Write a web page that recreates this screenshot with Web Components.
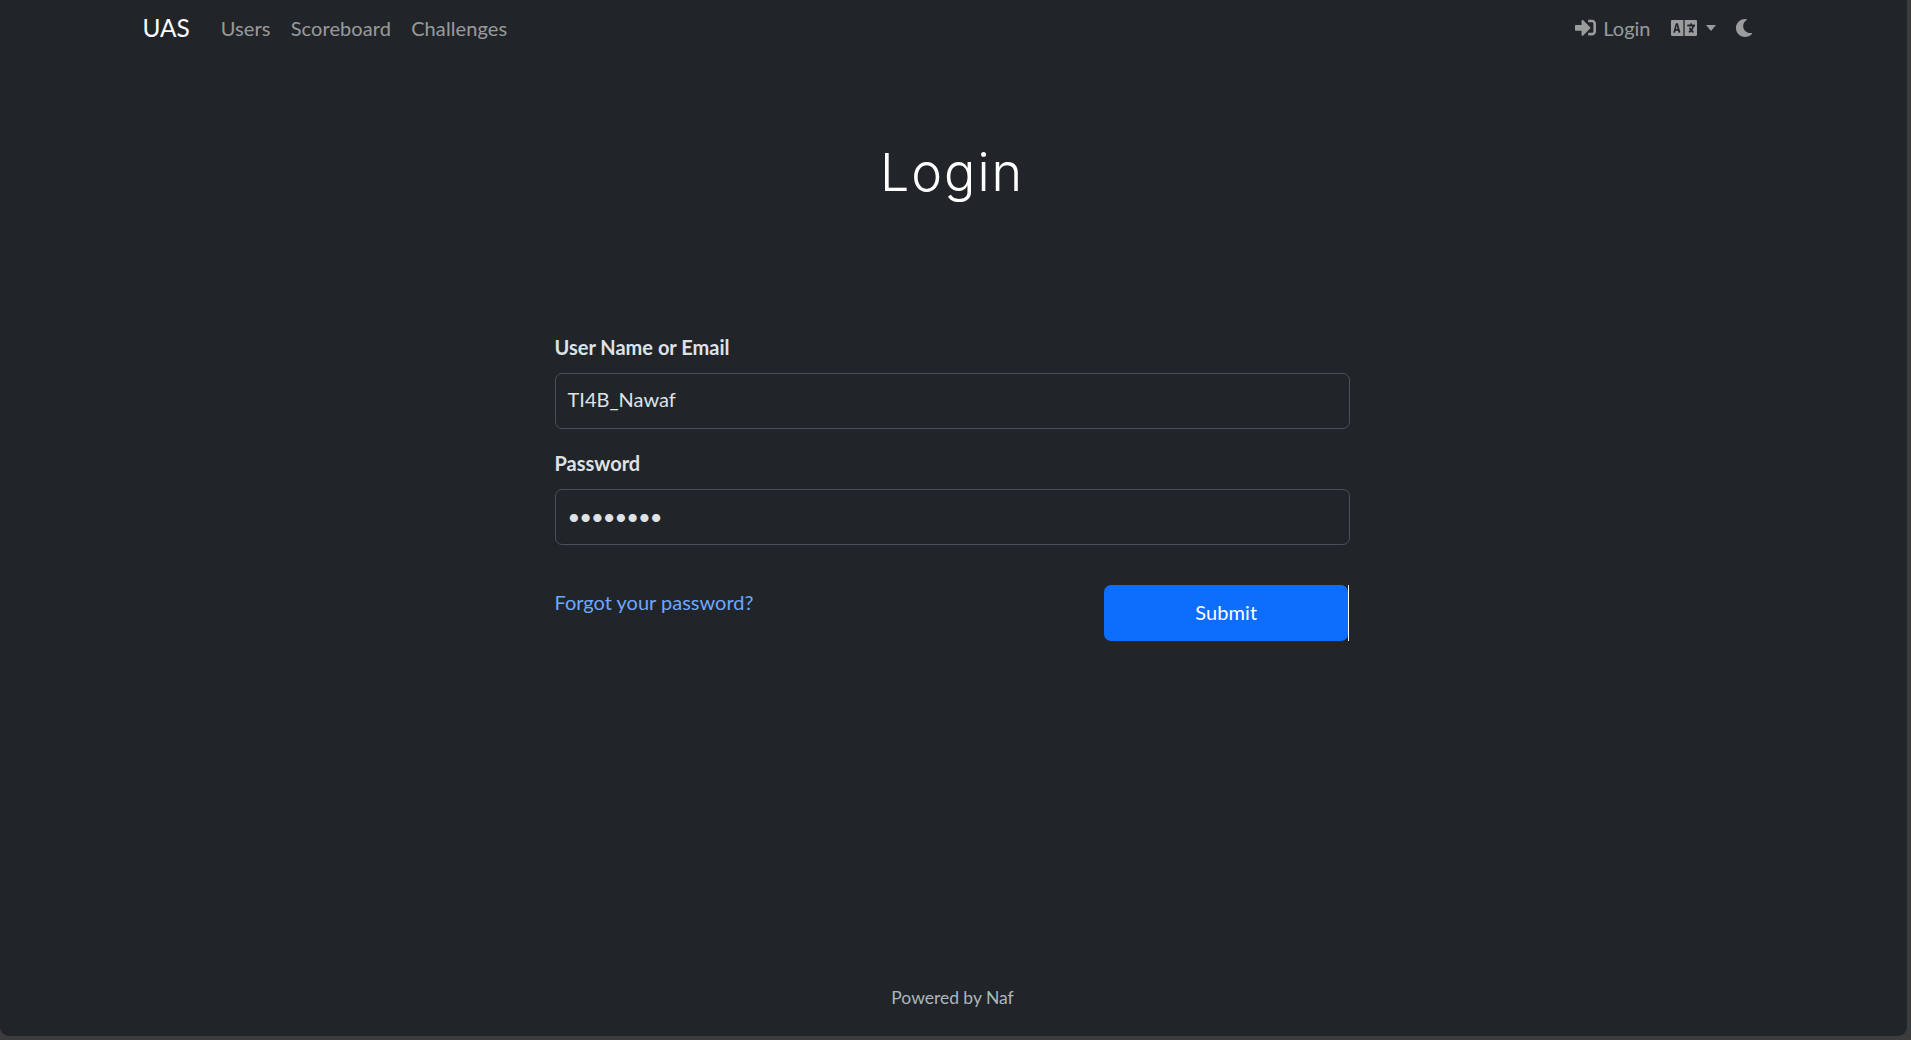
<!DOCTYPE html>
<html lang="en"><head><meta charset="utf-8"><title>Login</title>
<style>
html,body{margin:0;height:100%;background:#3c3c3c}
body{font-family:Lato,"Liberation Sans",sans-serif;font-size:20px;line-height:30px;overflow:hidden}
</style></head><body>
<x-app>
  <x-navbar slot="nav" brand="UAS">
    <x-navlink slot="left">Users</x-navlink>
    <x-navlink slot="left">Scoreboard</x-navlink>
    <x-navlink slot="left">Challenges</x-navlink>
  </x-navbar>
  <x-title>Login</x-title>
  <x-login-form></x-login-form>
  <x-footer slot="footer">Powered by Naf</x-footer>
</x-app>
<script>
function def(name, html, init){
  customElements.define(name, class extends HTMLElement{
    constructor(){super();this.attachShadow({mode:'open'}).innerHTML=html;}
    connectedCallback(){if(init)init.call(this);}
  });
}
const ICON={
 signin:'<svg viewBox="0 0 512 512" width="21" height="21" fill="currentColor"><path d="M416 448h-84c-6.6 0-12-5.4-12-12v-40c0-6.6 5.4-12 12-12h84c17.7 0 32-14.3 32-32V160c0-17.7-14.3-32-32-32h-84c-6.6 0-12-5.4-12-12V76c0-6.6 5.4-12 12-12h84c53 0 96 43 96 96v192c0 53-43 96-96 96zm-47-201L201 79c-15-15-41-4.5-41 17v96H24c-13.3 0-24 10.7-24 24v96c0 13.3 10.7 24 24 24h136v96c0 21.5 26 32 41 17l168-168c9.3-9.4 9.3-24.6 0-34z"/></svg>',
 lang:'<svg viewBox="0 96 640 320" width="26" height="16" preserveAspectRatio="none" fill="currentColor"><path d="M152.1 236.2c-3.5-12.1-7.8-33.2-7.8-33.2h-.5s-4.3 21.1-7.8 33.2l-11.1 37.5H163zM616 96H336v320h280c13.3 0 24-10.7 24-24V120c0-13.3-10.7-24-24-24zm-24 120c0 6.6-5.4 12-12 12h-11.4c-6.9 23.6-21.7 47.4-42.7 69.9 8.4 6.4 17.1 12.5 26.1 18 5.5 3.4 7.3 10.5 4.1 16.2l-7.9 13.9c-3.4 5.9-10.9 7.8-16.7 4.3-12.6-7.8-24.5-16.1-35.4-24.9-10.9 8.7-22.7 17.1-35.4 24.9-5.8 3.5-13.3 1.6-16.7-4.3l-7.9-13.9c-3.2-5.6-1.4-12.8 4.2-16.2 9.3-5.7 18-11.7 26.1-18-7.9-8.4-14.9-17-21-25.7-4-5.7-2.2-13.6 3.7-17.1l6.5-3.9 7.3-4.3c5.4-3.2 12.4-1.7 16 3.4 5 7 10.8 14 17.4 20.9 13.5-14.2 23.8-28.9 30-43.2H412c-6.6 0-12-5.4-12-12v-16c0-6.6 5.4-12 12-12h64v-16c0-6.6 5.4-12 12-12h16c6.6 0 12 5.4 12 12v16h64c6.6 0 12 5.4 12 12zM0 120v272c0 13.3 10.7 24 24 24h280V96H24c-13.3 0-24 10.7-24 24zm58.9 216.1L116.4 167c1.7-4.9 6.2-8.1 11.4-8.1h32.5c5.1 0 9.7 3.3 11.4 8.1l57.5 169.1c2.6 7.8-3.1 15.9-11.4 15.9h-22.9a12 12 0 0 1-11.5-8.6l-9.4-31.9h-60.2l-9.1 31.8c-1.5 5.1-6.2 8.7-11.5 8.7H70.3c-8.2 0-14-8.1-11.4-15.9z"/></svg>',
 moon:'<svg viewBox="0 0 512 512" width="18" height="18" fill="currentColor"><path d="M283.211 512c78.962 0 151.079-35.925 198.857-94.792 7.068-8.708-.639-21.43-11.562-19.35-124.203 23.654-238.262-71.576-238.262-196.954 0-72.222 38.662-138.635 101.498-174.394 9.686-5.512 7.25-20.197-3.756-22.23A258.156 258.156 0 0 0 283.211 0c-141.309 0-256 114.511-256 256 0 141.309 114.511 256 256 256z"/></svg>'
};
def('x-app',`<style>
:host{display:block;width:1907px;height:1036px;background:#212529;border-radius:0 0 9px 9px;overflow:hidden}
.wrap{display:flex;flex-direction:column;height:100%}
main{flex:1}
</style><div class="wrap"><slot name="nav"></slot><main><slot></slot></main><slot name="footer"></slot></div>`);
def('x-navlink',`<style>
:host{display:block;padding:0 10px;color:rgba(255,255,255,.55);letter-spacing:.1px}
</style><slot></slot>`);
def('x-navbar',`<style>
:host{display:block;color:rgba(255,255,255,.55)}
nav{width:1650px;margin:0 auto;box-sizing:border-box;padding:0 16px 0 14px;height:55px;display:flex;align-items:center}
.brand{font-size:24.4px;color:#fff;margin-right:21px;line-height:30px}
.left{display:flex}.right{margin-left:auto;display:flex;align-items:center}
.item{display:flex;align-items:center;padding:0 10px}
svg{display:block}
.login{padding-right:10.5px}
.login svg{margin-right:7px}
.lang{padding-right:9px}
.caret{width:0;height:0;border:5.5px solid transparent;border-top:6.5px solid currentColor;border-bottom:0;margin-left:8.5px}
</style><nav><span class="brand"></span><div class="left"><slot name="left"></slot></div>
<div class="right"><span class="item login">${ICON.signin}<span>Login</span></span><span class="item lang">${ICON.lang}<span class="caret"></span></span><span class="item">${ICON.moon}</span></div></nav>`,
function(){this.shadowRoot.querySelector('.brand').textContent=this.getAttribute('brand');});
def('x-title',`<style>
:host{display:block;padding:88px 0 0;height:278px;box-sizing:border-box;text-align:center;color:#fff}
h1{margin:0;font:300 52px/60px Inter,Lato,sans-serif;letter-spacing:2px;position:relative;left:-1.5px}
</style><h1><slot></slot></h1>`);
def('x-field',`<style>
:host{display:block;margin-bottom:20px}
label{display:block;font-weight:700;color:#dee2e6;margin-bottom:11px;line-height:29px}
.box{box-sizing:border-box;height:56px;border:1px solid #495057;border-radius:7px;padding:11px 12px;color:#dee2e6;line-height:29px}
</style><label></label><div class="box"><slot></slot></div>`,
function(){this.shadowRoot.querySelector('label').textContent=this.getAttribute('label');});
def('x-button',`<style>
:host{display:block;position:relative;box-sizing:border-box;width:244px;height:56px;padding-left:1.5px;background:#0d6efd;color:#fff;border-radius:7px;text-align:center;line-height:54px;letter-spacing:.1px}
:host::after{content:"";position:absolute;top:0;bottom:0;right:-1.5px;width:1.5px;background:#fff}
</style><slot></slot>`);
def('x-login-form',`<style>
:host{display:block;width:795px;margin:0 auto 0;position:relative;left:-1.5px}
.row{display:flex;justify-content:space-between;align-items:flex-start;margin-top:40px;padding-right:2px}
a{color:#6ea8fe;line-height:30px;margin-top:1.5px;text-decoration:none}
.dots{font-size:22px;letter-spacing:-1px;position:relative;top:1px}
</style><x-field label="User Name or Email"><span>TI4B_Nawaf</span></x-field>
<x-field label="Password"><span class="dots">••••••••</span></x-field>
<div class="row"><a href="#">Forgot your password?</a><x-button>Submit</x-button></div>`);
def('x-footer',`<style>
:host{display:block;text-align:center;color:#adb5bd;font-size:17.5px;line-height:26px;padding-bottom:25px;position:relative;left:-1px;letter-spacing:-.03px}
</style><slot></slot>`);
</script>
</body></html>
